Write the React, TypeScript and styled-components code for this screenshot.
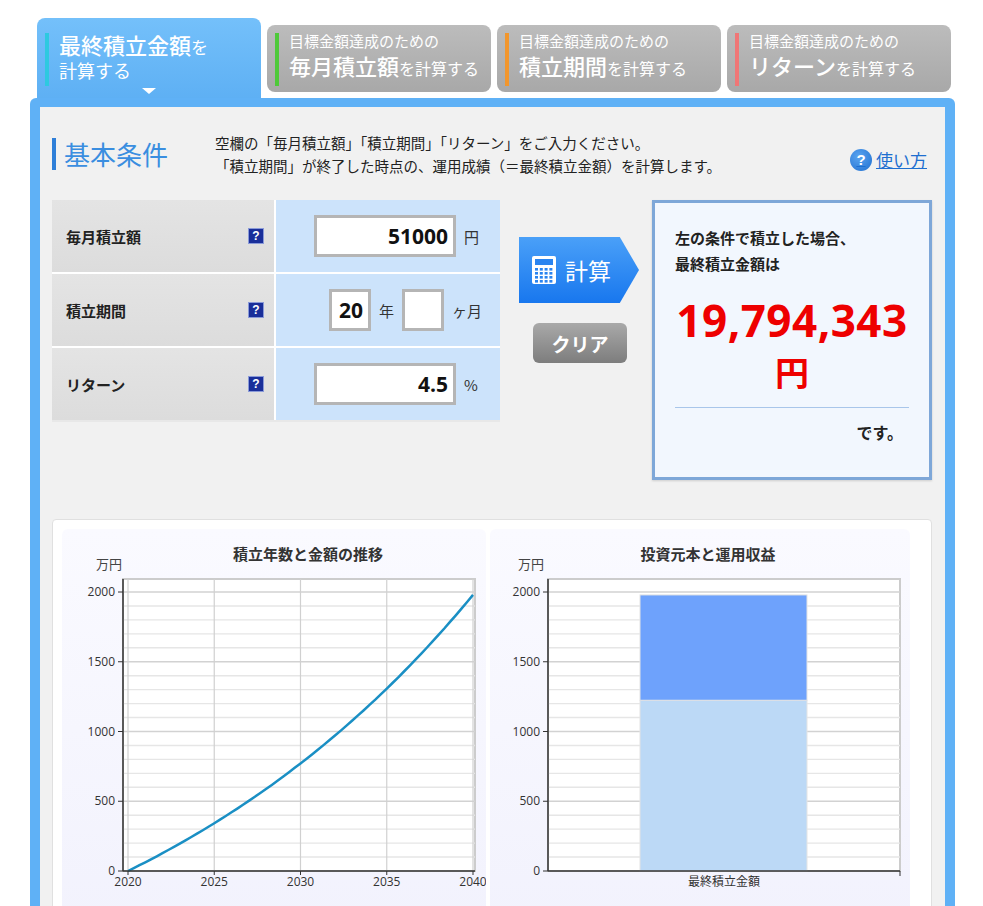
import React from "react";
import styled, { createGlobalStyle } from "styled-components";

const Global = createGlobalStyle`
  body { margin: 0; background: #fff; font-family: "Noto Sans CJK JP", "Noto Sans", sans-serif; }
`;

const Page = styled.div`
  width: 983px; height: 906px; overflow: hidden; position: relative;
`;
const Tabs = styled.div`
  display: flex; align-items: flex-end; gap: 6px; padding: 18px 0 0 37px; height: 80px;
`;
const Tab = styled.div<{ $active?: boolean; $bar: string }>`
  width: 224px; box-sizing: border-box;
  height: ${p => (p.$active ? "80px" : "67px")};
  margin-bottom: ${p => (p.$active ? "0" : "6px")};
  border-radius: 8px 8px ${p => (p.$active ? "0 0" : "8px 8px")};
  background: ${p => (p.$active ? "linear-gradient(#74c0fa,#5eb0f4)" : "linear-gradient(#bcbcbc,#a8a8a8)")};
  color: #fff; padding: ${p => (p.$active ? "12px 0 0 8px" : "5px 0 0 8px")};
  position: relative; display: flex;
  &::before { content: ""; width: 4px; height: 53px; margin-top: 3px; background: ${p => p.$bar}; margin-right: 10px; flex: none; }
`;
const TabText = styled.div`line-height: 1.3; white-space: nowrap;`;
const Small = styled.span<{ $s: number }>`font-size: ${p => p.$s}px;`;
const Big = styled.span<{ $s: number }>`font-size: ${p => p.$s}px; font-weight: 500;`;
const Arrow = styled.div`
  position: absolute; left: 105px; bottom: 4px; width: 0; height: 0;
  border-left: 7px solid transparent; border-right: 7px solid transparent; border-top: 6px solid #fff;
`;
const Panel = styled.div`
  margin-left: 30px; width: 925px; box-sizing: border-box; background: #5fb1f6;
  border-radius: 6px 6px 0 0; padding: 9px 10px 0 10px; height: 808px;
`;
const Inner = styled.div`background: #f1f1f1; height: 100%; padding: 0 12px 0 12px;`;
const Head = styled.div`display: flex; align-items: center; height: 93px;`;
const H2 = styled.div`
  font-size: 26px; color: #3a8ee0; width: 150px; display: flex; align-items: center; height: 36px;
  &::before { content: ""; width: 4px; height: 32px; background: #2f7fd8; margin-right: 8px; }
`;
const Desc = styled.div`font-size: 14.5px; color: #222; line-height: 23px; margin-left: 13px; flex: 1; margin-top: 0;`;
const Help = styled.a`
  font-size: 17px; color: #1e6fd0; text-decoration: underline; display: flex; align-items: center; gap: 4px; margin-right: 6px; margin-top: 12px;
`;
const HelpIcon = styled.span`
  width: 22px; height: 22px; border-radius: 50%; background: radial-gradient(circle at 40% 35%, #5aa4f0, #1f6fd0);
  color: #fff; font-weight: 700; font-size: 15px; display: flex; align-items: center; justify-content: center; font-family: "Liberation Sans", sans-serif;
`;
const Row = styled.div`display: flex; align-items: flex-start;`;
const Table = styled.div`width: 448px; display: grid; grid-template-columns: 222px 224px; gap: 2px; background: #fff; border-bottom: 2px solid #e8e8e8;`;
const Label = styled.div`
  height: 72px; background: linear-gradient(#e4e4e4,#dcdcdc); display: flex; align-items: center; justify-content: space-between;
  padding: 0 10px 0 14px; font-size: 15px; font-weight: 700; color: #222;
`;
const Q = styled.span`
  width: 16px; height: 16px; background: #1a2f9a; color: #fff; font-size: 12px; font-weight: 700; display: flex; align-items: center; justify-content: center; font-family: "Liberation Sans", sans-serif; border: 1px solid #8a9ad8; box-sizing: border-box;
`;
const Cell = styled.div`height: 72px; background: #cce3fb; display: flex; align-items: center; justify-content: flex-end; padding-right: 14px; gap: 8px; font-size: 15px; color: #333;`;
const Input = styled.div<{ $w: number }>`
  width: ${p => p.$w}px; height: 42px; box-sizing: border-box; border: 3px solid #b5b5b5; background: #fff;
  display: flex; align-items: center; justify-content: flex-end; padding-right: 5px;
  font-family: "Open Sans", sans-serif; font-weight: 700; font-size: 21px; color: #111;
`;
const Unit = styled.span<{ $w?: number }>`width: ${p => p.$w ?? 22}px; text-align: left;`;
const Buttons = styled.div`width: 152px; display: flex; flex-direction: column; align-items: center; padding-top: 37px; gap: 20px;`;
const Calc = styled.div`
  width: 120px; height: 66px; position: relative; margin-left: 6px;
  background: linear-gradient(#4aa0f8, #1877ee); clip-path: polygon(0 0, 84% 0, 100% 50%, 84% 100%, 0 100%);
  color: #fff; font-size: 23px; display: flex; align-items: center; padding-left: 12px; gap: 8px; box-sizing: border-box;
`;
const Clear = styled.div`
  width: 94px; height: 40px; border-radius: 6px; background: linear-gradient(#a9a9a9, #7d7d7d); color: #fff;
  font-size: 19px; font-weight: 700; display: flex; align-items: center; justify-content: center; margin-left: 8px;
`;
const Result = styled.div`
  width: 280px; height: 280px; box-sizing: border-box; border: 3px solid #7ea7d8; background: #f2f7fe; padding: 22px 20px 0 20px;
  box-shadow: 0 1px 2px rgba(0,0,0,.15);
`;
const RText = styled.div`font-size: 15px; font-weight: 700; color: #222; line-height: 26px;`;
const Amount = styled.div`
  color: #ee0000; font-family: "Open Sans", sans-serif; font-weight: 700; font-size: 44px; letter-spacing: 0.5px; text-align: center; line-height: 58px; margin: 14px -12px 0 -12px;
`;
const Yen = styled.div`color: #ee0000; font-weight: 700; font-size: 34px; text-align: center; line-height: 46px; margin-top: 0;`;
const Desu = styled.div`border-top: 1px solid #a9c6ea; margin-top: 12px; text-align: right; font-size: 16px; font-weight: 700; padding: 12px 6px 0 0; color: #222;`;
const Charts = styled.div`
  margin-top: 39px; background: #fff; border: 1px solid #e0e0e0; border-radius: 4px; width: 880px; height: 400px; box-sizing: border-box;
  display: flex; gap: 4px; padding: 9px 0 0 9px;
`;
const ChartBox = styled.div<{ $w: number }>`width: ${p => p.$w}px; height: 400px; background: linear-gradient(#fafaff, #f2f2fd); border-radius: 6px;`;

const Y0 = 342, Y2000 = 63;
const yv = (v: number) => Y0 - (v / 2000) * (Y0 - Y2000);

function Grid({ x0, x1 }: { x0: number; x1: number }) {
  const lines = [];
  for (let v = 100; v <= 2200; v += 100) {
    const y = yv(v);
    if (y < 50) break;
    lines.push(<line key={v} x1={x0} x2={x1} y1={y} y2={y} stroke={v % 500 === 0 ? "#d2d2d2" : "#e6e6e6"} strokeWidth={v % 500 === 0 ? 1.6 : 1.4} />);
  }
  return <>{lines}</>;
}
function YAxis({ x }: { x: number }) {
  return (
    <>
      <line x1={x} x2={x} y1={50} y2={Y0} stroke="#333" strokeWidth={1.5} />
      {[0, 500, 1000, 1500, 2000].map(v => (
        <g key={v}>
          <line x1={x - 5} x2={x} y1={yv(v)} y2={yv(v)} stroke="#333" />
          <text x={x - 8} y={yv(v) + 4} fontSize={12} textAnchor="end" fill="#333" fontFamily="Open Sans, sans-serif">{v}</text>
        </g>
      ))}
    </>
  );
}

function LineChart() {
  const x0 = 61, x1 = 413;
  const xs = (yr: number) => 66 + (yr / 20) * (411 - 66);
  const r = 0.045 / 12;
  const pts: string[] = [];
  for (let m = 0; m <= 240; m += 4) {
    const v = (51000 * (Math.pow(1 + r, m) - 1)) / r / 10000;
    pts.push(`${xs(m / 12).toFixed(1)},${yv(v).toFixed(1)}`);
  }
  return (
    <svg width={424} height={378}>
      <text x={246} y={31} fontSize={15} fontWeight={700} textAnchor="middle" fill="#333">積立年数と金額の推移</text>
      <text x={34} y={40} fontSize={13} fill="#444">万円</text>
      <rect x={x0} y={50} width={x1 - x0} height={Y0 - 50} fill="#fff" stroke="#ccc" strokeWidth={2} />
      <Grid x0={x0} x1={x1} />
      {[0, 5, 10, 15, 20].map(t => <line key={t} x1={xs(t)} x2={xs(t)} y1={50} y2={Y0} stroke="#d0d0d0" strokeWidth={1.2} />)}
      <polyline points={pts.join(" ")} fill="none" stroke="#1a8fc4" strokeWidth={2.5} />
      <YAxis x={x0} />
      <line x1={x0} x2={x1} y1={Y0} y2={Y0} stroke="#333" strokeWidth={1.5} />
      {[0, 5, 10, 15, 20].map(t => (
        <g key={t}>
          <line x1={xs(t)} x2={xs(t)} y1={Y0} y2={Y0 + 4} stroke="#333" />
          <text x={xs(t)} y={Y0 + 15} fontSize={12} textAnchor="middle" fill="#333" fontFamily="Open Sans, sans-serif">{2020 + t * 1}</text>
        </g>
      ))}
    </svg>
  );
}

function BarChart() {
  const x0 = 58, x1 = 410;
  return (
    <svg width={420} height={378}>
      <text x={218} y={31} fontSize={15} fontWeight={700} textAnchor="middle" fill="#333">投資元本と運用収益</text>
      <text x={28} y={40} fontSize={13} fill="#444">万円</text>
      <rect x={x0} y={50} width={x1 - x0} height={Y0 - 50} fill="#fff" stroke="#ccc" strokeWidth={2} />
      <Grid x0={x0} x1={x1} />
      <rect x={150} y={yv(1224)} width={167} height={Y0 - yv(1224)} fill="#bcd9f6" stroke="#e4e4e4" />
      <rect x={150} y={yv(1979)} width={167} height={yv(1224) - yv(1979)} fill="#6ea2fc" stroke="#e4e4e4" />
      <YAxis x={x0} />
      <line x1={x0} x2={x1} y1={Y0} y2={Y0} stroke="#333" strokeWidth={1.5} />
      <line x1={x1} x2={x1} y1={Y0} y2={Y0 + 5} stroke="#333" />
      <text x={234} y={Y0 + 15} fontSize={12} textAnchor="middle" fill="#333">最終積立金額</text>
    </svg>
  );
}

function Calculator() {
  return (
    <svg width={26} height={30} viewBox="0 0 26 30">
      <rect x={1} y={1} width={24} height={28} rx={2} fill="#fff" />
      <rect x={4} y={4} width={18} height={6} fill="#2a84f0" />
      {[0, 1, 2, 3].map(r => [0, 1, 2, 3].map(c => (
        <rect key={`${r}${c}`} x={4 + c * 4.8} y={13 + r * 4} width={3} height={2.6} fill="#2a84f0" />
      )))}
    </svg>
  );
}

export default function App() {
  return (
    <Page>
      <Global />
      <Tabs>
        <Tab $active $bar="#2ec9e0">
          <TabText><Big $s={22}>最終積立金額</Big><Small $s={17}>を</Small><br /><Small $s={18}>計算する</Small></TabText>
          <Arrow />
        </Tab>
        <Tab $bar="#4fc93a">
          <TabText><Small $s={15}>目標金額達成のための</Small><br /><Big $s={22}>毎月積立額</Big><Small $s={16}>を計算する</Small></TabText>
        </Tab>
        <Tab $bar="#f2962c">
          <TabText><Small $s={15}>目標金額達成のための</Small><br /><Big $s={22}>積立期間</Big><Small $s={16}>を計算する</Small></TabText>
        </Tab>
        <Tab $bar="#f07676">
          <TabText><Small $s={15}>目標金額達成のための</Small><br /><Big $s={22}>リターン</Big><Small $s={16}>を計算する</Small></TabText>
        </Tab>
      </Tabs>
      <Panel>
        <Inner>
          <Head>
            <H2>基本条件</H2>
            <Desc>
              空欄の「毎月積立額」「積立期間」「リターン」をご入力ください。<br />
              「積立期間」が終了した時点の、運用成績（＝最終積立金額）を計算します。
            </Desc>
            <Help><HelpIcon>?</HelpIcon>使い方</Help>
          </Head>
          <Row>
            <Table>
              <Label>毎月積立額<Q>?</Q></Label>
              <Cell><Input $w={142}>51000</Input><Unit>円</Unit></Cell>
              <Label>積立期間<Q>?</Q></Label>
              <Cell><Input $w={42}>20</Input><span>年</span><Input $w={42} /><Unit $w={34}>ヶ月</Unit></Cell>
              <Label>リターン<Q>?</Q></Label>
              <Cell><Input $w={142}>4.5</Input><Unit>%</Unit></Cell>
            </Table>
            <Buttons>
              <Calc><Calculator />計算</Calc>
              <Clear>クリア</Clear>
            </Buttons>
            <Result>
              <RText>左の条件で積立した場合、<br />最終積立金額は</RText>
              <Amount>19,794,343</Amount>
              <Yen>円</Yen>
              <Desu>です。</Desu>
            </Result>
          </Row>
          <Charts>
            <ChartBox $w={424}><LineChart /></ChartBox>
            <ChartBox $w={420}><BarChart /></ChartBox>
          </Charts>
        </Inner>
      </Panel>
    </Page>
  );
}
